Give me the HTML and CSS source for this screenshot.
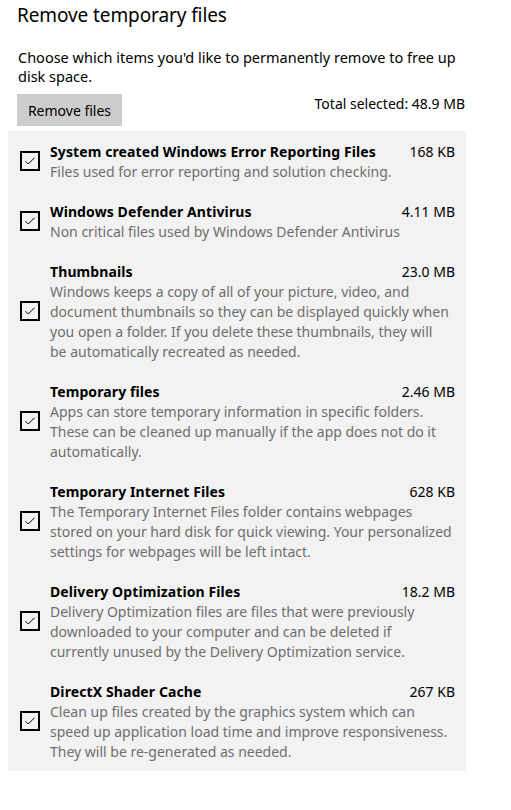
FILE: index.html
```html
<!DOCTYPE html>
<html>
<head>
<meta charset="utf-8">
<link rel="stylesheet" href="styles.css">
</head>
<body>
<div class="page">
  <header class="intro">
    <h1 class="title">Remove temporary files</h1>
    <p class="lead">Choose which items you'd like to permanently remove to free up disk space.</p>
    <div class="actions">
      <button class="btn">Remove files</button>
      <span class="total">Total selected: 48.9 MB</span>
    </div>
  </header>

  <ul class="list">
    <li class="item">
      <span class="check"><svg viewBox="0 0 16 16"><path d="M3.5 8.2 L6.3 11 L12.6 4.7"/></svg></span>
      <div class="body">
        <div class="head"><span class="name">System created Windows Error Reporting Files</span><span class="size">168 KB</span></div>
        <p class="desc">Files used for error reporting and solution checking.</p>
      </div>
    </li>
    <li class="item">
      <span class="check"><svg viewBox="0 0 16 16"><path d="M3.5 8.2 L6.3 11 L12.6 4.7"/></svg></span>
      <div class="body">
        <div class="head"><span class="name">Windows Defender Antivirus</span><span class="size">4.11 MB</span></div>
        <p class="desc">Non critical files used by Windows Defender Antivirus</p>
      </div>
    </li>
    <li class="item">
      <span class="check"><svg viewBox="0 0 16 16"><path d="M3.5 8.2 L6.3 11 L12.6 4.7"/></svg></span>
      <div class="body">
        <div class="head"><span class="name">Thumbnails</span><span class="size">23.0 MB</span></div>
        <p class="desc">Windows keeps a copy of all of your picture, video, and document thumbnails so they can be displayed quickly when you open a folder. If you delete these thumbnails, they will<br>be automatically recreated as needed.</p>
      </div>
    </li>
    <li class="item">
      <span class="check"><svg viewBox="0 0 16 16"><path d="M3.5 8.2 L6.3 11 L12.6 4.7"/></svg></span>
      <div class="body">
        <div class="head"><span class="name">Temporary files</span><span class="size">2.46 MB</span></div>
        <p class="desc">Apps can store temporary information in specific folders. These can be cleaned up manually if the app does not do it automatically.</p>
      </div>
    </li>
    <li class="item">
      <span class="check"><svg viewBox="0 0 16 16"><path d="M3.5 8.2 L6.3 11 L12.6 4.7"/></svg></span>
      <div class="body">
        <div class="head"><span class="name">Temporary Internet Files</span><span class="size">628 KB</span></div>
        <p class="desc">The Temporary Internet Files folder contains webpages stored on your hard disk for quick viewing. Your personalized settings for webpages will be left intact.</p>
      </div>
    </li>
    <li class="item">
      <span class="check"><svg viewBox="0 0 16 16"><path d="M3.5 8.2 L6.3 11 L12.6 4.7"/></svg></span>
      <div class="body">
        <div class="head"><span class="name">Delivery Optimization Files</span><span class="size">18.2 MB</span></div>
        <p class="desc">Delivery Optimization files are files that were previously downloaded to your computer and can be deleted if<br>currently unused by the Delivery Optimization service.</p>
      </div>
    </li>
    <li class="item">
      <span class="check"><svg viewBox="0 0 16 16"><path d="M3.5 8.2 L6.3 11 L12.6 4.7"/></svg></span>
      <div class="body">
        <div class="head"><span class="name">DirectX Shader Cache</span><span class="size">267 KB</span></div>
        <p class="desc">Clean up files created by the graphics system which can speed up application load time and improve responsiveness. They will be re-generated as needed.</p>
      </div>
    </li>
  </ul>
</div>
</body>
</html>
```

FILE: styles.css
```css
* { box-sizing: border-box; }
html, body { margin: 0; padding: 0; background: #ffffff; }
body {
  font-family: "Noto Sans", "Open Sans", "Liberation Sans", sans-serif;
  color: #000;
  width: 511px;
}
.page { padding: 0 45px 0 8px; width: 511px; }
.intro { padding-left: 9px; width: 458px; }
.title {
  margin: 0;
  padding-top: 1px;
  font-size: 19px;
  font-weight: 400;
  line-height: 28px;
  letter-spacing: -0.1px;
}
.lead {
  margin: 19px 0 0 1px;
  font-size: 14.5px;
  line-height: 19px;
  width: 448px;
}
.actions {
  display: flex;
  justify-content: space-between;
  align-items: flex-start;
  margin-top: 8px;
  padding-right: 1px;
}
.btn {
  font: inherit;
  font-size: 14px;
  height: 32px;
  width: 105px;
  padding: 0;
  border: 0;
  background: #cccccc;
  color: #000;
}
.total {
  font-size: 14px;
  line-height: 20px;
  padding-top: 0;
}
.list {
  list-style: none;
  margin: 5px 0 0 0;
  padding: 11px 11px 9px 12px;
  width: 458px;
  background: #f2f2f2;
  display: flex;
  flex-direction: column;
  gap: 20px;
}
.item {
  display: flex;
  align-items: center;
  gap: 10px;
}
.check {
  flex: none;
  width: 20px;
  height: 20px;
  border: 2px solid #000;
  margin-top: -2px;
  display: flex;
  align-items: center;
  justify-content: center;
}
.check svg { width: 16px; height: 16px; }
.check path { fill: none; stroke: #000; stroke-width: 1; }
.body { flex: 1; min-width: 0; }
.head {
  display: flex;
  justify-content: space-between;
  font-size: 14px;
  line-height: 20px;
}
.name { font-weight: 700; letter-spacing: 0.1px; }
.size { font-weight: 400; }
.desc {
  margin: 0;
  font-size: 14px;
  line-height: 20px;
  color: #6e6e6e;
}
```
